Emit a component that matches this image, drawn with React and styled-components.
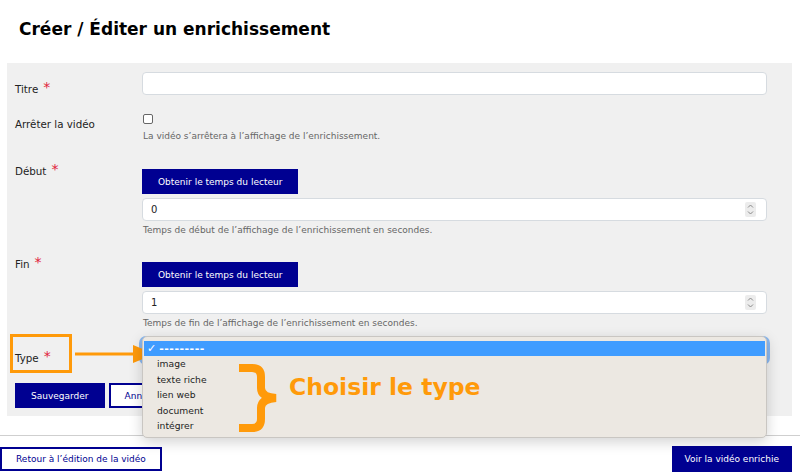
import React from 'react';
import styled, { createGlobalStyle } from 'styled-components';

const GlobalStyle = createGlobalStyle`
  body {
    margin: 0;
    background: #fff;
    font-family: "DejaVu Sans", Verdana, sans-serif;
    color: #161616;
  }
`;

const navy = '#000091';
const orange = '#ff9a0a';

const Page = styled.div`
  width: 800px;
  height: 476px;
  overflow: hidden;
`;

const Title = styled.h1`
  margin: 0 0 24px;
  padding: 19px 0 0 19px;
  font-size: 17px;
  line-height: 20px;
  font-weight: bold;
  color: #000;
`;

const Panel = styled.form`
  margin: 0 8px 0 7px;
  padding: 9px 25px 8px 8px;
  background: #f0f0f0;
`;

const Row = styled.div`
  position: relative;
  display: grid;
  grid-template-columns: 127px 1fr;
  align-items: start;
  margin-top: ${p => p.$gap || 0}px;
`;

const Label = styled.label`
  padding-top: ${p => p.$top || 0}px;
  font-size: 10.3px;
  line-height: 14px;
  color: #222;
`;

const Required = styled.span`
  margin-left: 5px;
  color: #e0223a;
  font-size: 14px;
  vertical-align: 1px;
`;

const Field = styled.div`
  position: relative;
  display: flex;
  flex-direction: column;
  align-items: flex-start;
  padding-top: ${p => p.$top || 0}px;
`;

const TextInput = styled.div`
  box-sizing: border-box;
  width: 100%;
  height: 23px;
  margin-top: ${p => p.$gap || 0}px;
  padding: 0 8px;
  display: flex;
  align-items: center;
  justify-content: space-between;
  background: #fff;
  border: 1px solid #d6dbe0;
  border-radius: 4px;
  font-size: 10px;
  color: #222;
`;

const Spinner = styled.span`
  display: flex;
  align-items: center;
  justify-content: center;
  width: 11px;
  height: 15px;
  margin-right: 2px;
  background: #ececec;
  border-radius: 2px;
`;

const Checkbox = styled.span`
  box-sizing: border-box;
  width: 10px;
  height: 10px;
  margin-left: 1px;
  background: #fff;
  border: 1px solid #666;
  border-radius: 2px;
`;

const Help = styled.p`
  margin: ${p => p.$gap || 3}px 0 0 1px;
  font-size: 9px;
  line-height: 12px;
  color: #666;
`;

const Button = styled.button`
  box-sizing: border-box;
  height: ${p => p.$h || 25}px;
  padding: 0 ${p => p.$px || 16}px;
  font-family: inherit;
  font-size: 9px;
  background: ${p => (p.$outline ? '#fff' : navy)};
  color: ${p => (p.$outline ? navy : '#fff')};
  border: ${p => (p.$outline ? `2px solid ${navy}` : 'none')};
  border-radius: 0;
`;

const Actions = styled.div`
  display: flex;
  gap: 4px;
  margin-top: 18px;
`;

const Divider = styled.hr`
  margin: 19px 0 0;
  border: none;
  border-top: 1px solid #cfcfcf;
`;

const Footer = styled.div`
  display: flex;
  justify-content: space-between;
  align-items: center;
  padding: 10px 8px 0 0;
`;

const Menu = styled.div`
  position: absolute;
  top: -3px;
  left: 0;
  width: 625px;
  height: 102px;
  box-sizing: border-box;
  padding-top: 4px;
  background: #ece8e2;
  border: 1px solid #c9c6c2;
  border-radius: 5px;
  box-shadow: 0 4px 14px rgba(0, 0, 0, 0.18);
  font-size: 9.2px;
  color: #1d1d1d;
  z-index: 2;
`;

const Selected = styled.div`
  display: flex;
  align-items: center;
  gap: 3px;
  height: 15px;
  margin: 0 1px;
  padding-left: 3px;
  background: #3f9cff;
  color: #fff;
  font-size: 11px;
`;

const Dashes = styled.span`
  letter-spacing: 0.5px;
  font-weight: bold;
`;

const Option = styled.div`
  height: 15.5px;
  line-height: 15.5px;
  padding-left: 14px;
`;

const Callout = styled.div`
  position: absolute;
  left: -5px;
  top: -5px;
  width: 62px;
  height: 39px;
  box-sizing: border-box;
  border: 3px solid ${orange};
`;

const Arrow = styled.svg`
  position: absolute;
  left: 60px;
  top: 5px;
`;

const Brace = styled.svg`
  position: absolute;
  left: 95px;
  top: 27px;
`;

const Hint = styled.span`
  position: absolute;
  left: 146px;
  top: 36px;
  font-size: 23.5px;
  font-weight: bold;
  color: ${orange};
  white-space: nowrap;
`;

const Ring = styled.div`
  box-sizing: border-box;
  width: 100%;
  height: 23px;
  border: 1px solid #d6dbe0;
  border-radius: 4px;
  background: #fff;
  box-shadow: 0 0 0 3px #8ab8f0;
`;

function NumberSpinner() {
  return (
    <Spinner>
      <svg width="7" height="11" viewBox="0 0 7 11" fill="none" stroke="#8a8a8a" strokeWidth="1">
        <path d="M1 3.5 3.5 1 6 3.5" />
        <path d="M1 7.5 3.5 10 6 7.5" />
      </svg>
    </Spinner>
  );
}

export default function App() {
  const options = ['image', 'texte riche', 'lien web', 'document', 'intégrer'];

  return (
    <Page>
      <GlobalStyle />
      <Title>Créer / Éditer un enrichissement</Title>

      <Panel>
        <Row>
          <Label $top={8}>Titre<Required>*</Required></Label>
          <Field>
            <TextInput />
          </Field>
        </Row>

        <Row $gap={18}>
          <Label $top={3}>Arrêter la vidéo</Label>
          <Field>
            <Checkbox />
            <Help $gap={6}>La vidéo s’arrêtera à l’affichage de l’enrichissement.</Help>
          </Field>
        </Row>

        <Row $gap={20}>
          <Label>Début<Required>*</Required></Label>
          <Field $top={7}>
            <Button>Obtenir le temps du lecteur</Button>
            <TextInput $gap={4}>0<NumberSpinner /></TextInput>
            <Help>Temps de début de l’affichage de l’enrichissement en secondes.</Help>
          </Field>
        </Row>

        <Row $gap={19}>
          <Label>Fin<Required>*</Required></Label>
          <Field $top={7}>
            <Button>Obtenir le temps du lecteur</Button>
            <TextInput $gap={4}>1<NumberSpinner /></TextInput>
            <Help>Temps de fin de l’affichage de l’enrichissement en secondes.</Help>
          </Field>
        </Row>

        <Row $gap={10}>
          <Label $top={10}>Type<Required>*</Required></Label>
          <Field>
            <Ring />
            <Menu>
              <Selected>
                <span>✓</span>
                <Dashes>---------</Dashes>
              </Selected>
              {options.map(o => (
                <Option key={o}>{o}</Option>
              ))}
              <Brace width="42" height="68" viewBox="0 0 42 68" fill="none" stroke={orange} strokeWidth="8" strokeLinecap="butt">
                <path d="M1 4 H14 Q23 4 23 13 V24 Q23 33 38 34 Q23 35 23 44 V55 Q23 64 14 64 H1" />
              </Brace>
              <Hint>Choisir le type</Hint>
            </Menu>
          </Field>
          <Callout />
          <Arrow width="82" height="20" viewBox="0 0 82 20">
            <line x1="0" y1="10" x2="62" y2="10" stroke={orange} strokeWidth="3" />
            <polygon points="58,1 80,10 58,19" fill={orange} />
          </Arrow>
        </Row>

        <Actions>
          <Button $px={16}>Sauvegarder</Button>
          <Button $outline $px={14}>Annuler</Button>
        </Actions>
      </Panel>

      <Divider />

      <Footer>
        <Button $outline $h={24} $px={14}>Retour à l’édition de la vidéo</Button>
        <Button $h={26} $px={13}>Voir la vidéo enrichie</Button>
      </Footer>
    </Page>
  );
}
